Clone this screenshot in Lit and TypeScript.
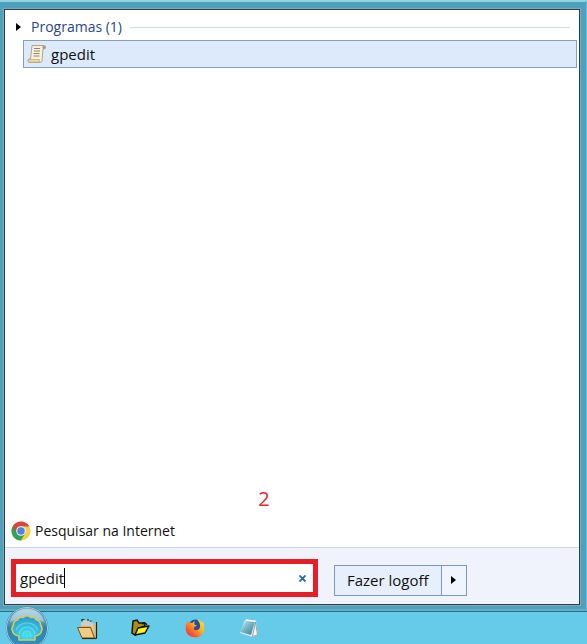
import { LitElement, html, css, svg } from "lit";
import { customElement, state } from "lit/decorators.js";

const scrollIcon = svg`
  <svg viewBox="0 0 20 20" width="20" height="20" aria-hidden="true">
    <path d="M5 1.500H17Q19 1.700 18.500 4Q18 5.500 16 5L15 17Q14.500 18.500 13 18.500H2Q.5 18 1 16Q1.500 14.500 3.500 14.800Z" fill="#f8f0d8" stroke="#b3a58a" stroke-width="1"/>
    <path d="M16 2Q14.600 3 16 5Q18.500 5.300 18.500 3.200Q18 1.500 16 2Z" fill="#a8977e"/>
    <path d="M2 15.500H12.500Q11.500 17 12.800 18.200H2Q.8 17 2 15.500Z" fill="#ead7a6" stroke="#c0a873" stroke-width=".7"/>
    <path d="M7 4.500H13M7 7H13M6.500 9.500H12.500M6.500 12H12.500" stroke="#8c877c" stroke-width="1.200"/>
  </svg>`;

const chromeIcon = svg`
  <svg viewBox="0 0 48 48" width="20" height="20" aria-hidden="true">
    <circle cx="24" cy="24" r="23" fill="#f6cf4f"/>
    <path d="M24 24L4.100 12.500A23 23 0 0 0 24 47L34 29.800Z" fill="#35a152"/>
    <path d="M4.100 12.500A23 23 0 0 1 43.900 12.500L44 13H24L14 29.800Z" fill="#cf4b41"/>
    <circle cx="24" cy="24" r="11.500" fill="#f4f4f4"/>
    <circle cx="24" cy="24" r="9" fill="#4a86e0"/>
  </svg>`;

const shellIcon = svg`
  <svg viewBox="0 0 44 44" width="44" height="44" aria-hidden="true">
    <defs>
      <linearGradient id="orb" x1="0" y1="0" x2="0" y2="1">
        <stop offset="0" stop-color="#a5c9da"/><stop offset=".3" stop-color="#6ba6c2"/>
        <stop offset=".5" stop-color="#2f80a8"/><stop offset="1" stop-color="#2b95c2"/>
      </linearGradient>
      <radialGradient id="shell" cx=".5" cy=".8" r=".7">
        <stop offset="0" stop-color="#43e2f4"/><stop offset="1" stop-color="#2f9fca"/>
      </radialGradient>
    </defs>
    <circle cx="22" cy="22" r="20.500" fill="url(#orb)" stroke="#3d7894" stroke-width="1.600"/>
    <circle cx="22" cy="22" r="20.500" fill="none" stroke="#a9dcef" stroke-width=".9"/>
    <path d="M5 16Q8 4 22 3Q36 4 39 16Q30 12 22 13Q13 12 5 16Z" fill="#d4e6ee" opacity=".5"/>
    <path d="M14 34V30Q8 29 7.500 25Q6 22 8.500 19Q8.500 14.500 12.500 14Q14 10.500 18 11.500Q22 8 26 11.500Q30 10.500 31.500 14Q35.500 14.500 35.500 19Q38 22 36.500 25Q36 29 30 30V34Z" fill="url(#shell)" stroke="#d4cb62" stroke-width="1.600" stroke-linejoin="round"/>
    <path d="M11 24Q14 17 22 17Q30 17 33 24M14 28Q16 21 22 21Q28 21 30 28M18 31Q18 25 22 25Q26 25 26 31" fill="none" stroke="#7ce5f2" stroke-width="1.200" opacity=".6"/>
  </svg>`;

const folderIcon = svg`
  <svg viewBox="0 0 22 22" width="22" height="22" aria-hidden="true">
    <path d="M4 4L7 2H13V4L18 6V19L4 12Z" fill="#cfcdc8"/>
    <path d="M5 3.500V1.500H7.500M11 1V3M12.500 3H14.500" fill="none" stroke="#17313d" stroke-width="1.200"/>
    <path d="M16 6L19.500 4V20H17Z" fill="#d9bd7f"/>
    <path d="M19.500 4V20.500" stroke="#282315" stroke-width="1.200"/>
    <path d="M4 8H14L18.500 20H8Z" fill="#d8b065"/>
    <path d="M.5 9.500H13.500L17.500 20H5Z" fill="#f0cd80" stroke="#765422" stroke-width="1"/>
    <path d="M5 20.500H19.500" stroke="#3b2c14" stroke-width="1.200"/>
  </svg>`;

const openFolderIcon = svg`
  <svg viewBox="0 0 20 20" width="20" height="20" aria-hidden="true">
    <path d="M2 3L6 2L8 5H13L14 8L8 10L4 17L1 15Z" fill="#ae8b17" stroke="#171805" stroke-width="1.500"/>
    <path d="M11 6Q13 3 16 7" fill="none" stroke="#171805" stroke-width="1.500"/>
    <path d="M7 10L18 8L14 15L4 17Z" fill="#f7f325" stroke="#171805" stroke-width="1.500" stroke-linejoin="round"/>
  </svg>`;

const firefoxIcon = svg`
  <svg viewBox="0 0 20 20" width="20" height="20" aria-hidden="true">
    <defs>
      <linearGradient id="fox" x1="1" y1="0" x2="0" y2="1">
        <stop offset="0" stop-color="#ffe936"/><stop offset=".4" stop-color="#ffae22"/>
        <stop offset=".7" stop-color="#f95b2b"/><stop offset="1" stop-color="#e22857"/>
      </linearGradient>
    </defs>
    <circle cx="10.500" cy="9" r="7.500" fill="#234f9c"/>
    <path d="M2.500 3L4 5Q6 4 7 5L10 3Q9 5 9.500 6.500L12 7.500L9.500 9Q8 11 10 12Q12 13 14 11Q16 9 14.500 5Q13.500 3 12 1.500Q16 2 17 5L17.500 3Q20 7 19.300 12Q17 19.500 10 19.500Q2 19 .7 12Q0 7 2.500 3Z" fill="url(#fox)"/>
  </svg>`;

const notesIcon = svg`
  <svg viewBox="0 0 20 20" width="20" height="20" aria-hidden="true">
    <defs>
      <linearGradient id="note" x1="0" y1="0" x2="1" y2="1">
        <stop offset="0" stop-color="#d3eff4"/><stop offset=".5" stop-color="#71b3c5"/><stop offset="1" stop-color="#38798d"/>
      </linearGradient>
    </defs>
    <path d="M6 2L17 3L19 17L14 19L1 15Z" fill="#e8eff0"/>
    <path d="M7 2L16 3.500L12 17L1 14Z" fill="url(#note)"/>
    <path d="M7 2L17 3.500" stroke="#fff" stroke-width="1.600"/>
    <path d="M16.500 4L18.500 17L13.500 18.500Z" fill="#f3f5f4" stroke="#60757b" stroke-width=".6"/>
  </svg>`;

const arrowIcon = svg`
  <svg viewBox="0 0 5 8" width="5" height="8" aria-hidden="true"><path d="M0 0L5 4L0 8Z" fill="#000"/></svg>`;

@customElement("app-root")
export class AppRoot extends LitElement {
  @state() private query = "gpedit";

  static styles = css`
    :host {
      display: flex;
      flex-direction: column;
      box-sizing: border-box;
      min-height: 100vh;
      overflow: hidden;
      font: 14px/20px "Open Sans", "Noto Sans", sans-serif;
      color: #111;
      background: #66cae9;
    }
    * { box-sizing: border-box; }
    button, input { font: inherit; color: inherit; margin: 0; border-radius: 0; }
    button { padding: 0; border: 0; background: none; }
    svg { display: block; flex: none; }
    .frame {
      flex: 1;
      display: flex;
      padding: 7px 6px 4px 4px;
      background: #4fa0bc;
      border-top: 2px solid #8fd5e2;
      border-right: 1px solid #66b9d6;
      border-bottom: 2px solid #62aec4;
    }
    .menu {
      flex: 1;
      min-width: 0;
      display: flex;
      flex-direction: column;
      background: #fff;
      border: 1px solid #26414d;
      outline: 1px solid #83aab4;
    }
    .results {
      flex: 1;
      display: flex;
      flex-direction: column;
      padding: 7px 2px 0 18px;
    }
    .group {
      display: flex;
      align-items: center;
      gap: 8px;
      margin: 0 7px 3px -7px;
    }
    .group-toggle { display: flex; align-items: center; gap: 10px; color: #27478c; }
    .rule { flex: 1; height: 1px; background: #cbdde9; }
    .result, .query, .logoff-main { font-size: 15px; }
    .result {
      display: flex;
      align-items: center;
      gap: 4px;
      height: 28px;
      padding: 0 3px;
      border: 1px solid #869fbb;
      background: #dceafc;
      text-align: left;
    }
    .step {
      margin-top: auto;
      padding-right: 72px;
      text-align: center;
      font-size: 20px;
      line-height: 24px;
      color: #e3272e;
    }
    .web {
      display: flex;
      align-items: center;
      gap: 4px;
      padding: 10px 6px 6px;
      color: inherit;
      text-decoration: none;
    }
    .actions {
      display: flex;
      align-items: center;
      gap: 16px;
      padding: 11px 6px 7px;
      border-top: 1px solid #ced9e6;
      background: #f0f3fb;
    }
    .search {
      flex: 0 1 307px;
      min-width: 0;
      display: flex;
      align-items: center;
      height: 38px;
      padding: 0 7px 0 4px;
      border: 5px solid #e61e28;
      background: #fff;
    }
    .query {
      field-sizing: content;
      padding: 0;
      border: 0;
      outline: 0;
      background: none;
      caret-color: transparent;
    }
    .caret { width: 1px; height: 20px; background: #000; }
    .clear { display: flex; margin-left: auto; }
    .logoff { display: flex; height: 31px; margin-top: 4px; border: 1px solid #7b97ba; }
    .logoff-main { padding: 0 12px; background: #e7effc; }
    .logoff-more { display: grid; place-items: center; width: 25px; border-left: 1px solid #7b97ba; background: #f0f4fc; }
    .taskbar {
      display: flex;
      align-items: center;
      gap: 34px;
      height: 33px;
      padding-left: 5px;
      border-top: 1px solid #2c6e88;
    }
    .task { display: grid; place-items: center; width: 20px; height: 20px; }
    .orb { width: 44px; height: 44px; margin-right: -6px; }
  `;

  private onInput(e: Event) {
    this.query = (e.target as HTMLInputElement).value;
  }

  render() {
    return html`
      <main class="frame">
        <section class="menu">
          <div class="results">
            <div class="group">
              <button class="group-toggle">${arrowIcon}<span>Programas (1)</span></button>
              <span class="rule"></span>
            </div>
            <button class="result">${scrollIcon}<span>gpedit</span></button>
            <div class="step">2</div>
          </div>
          <a class="web" href="#">${chromeIcon}<span>Pesquisar na Internet</span></a>
          <div class="actions">
            <div class="search">
              <input class="query" type="text" aria-label="Pesquisar" .value=${this.query} @input=${this.onInput} />
              <span class="caret"></span>
              <button class="clear" aria-label="Limpar" @click=${() => (this.query = "")}>
                <svg viewBox="0 0 7 7" width="7" height="7"><path d="M.5 .5L6.500 6.500M6.500 .5L.5 6.500" stroke="#286c99" stroke-width="1.900"/></svg>
              </button>
            </div>
            <div class="logoff">
              <button class="logoff-main">Fazer logoff</button>
              <button class="logoff-more" aria-label="Mais opções">${arrowIcon}</button>
            </div>
          </div>
        </section>
      </main>
      <nav class="taskbar">
        <button class="orb" aria-label="Iniciar">${shellIcon}</button>
        <button class="task" aria-label="Explorador">${folderIcon}</button>
        <button class="task" aria-label="Pasta">${openFolderIcon}</button>
        <button class="task" aria-label="Firefox">${firefoxIcon}</button>
        <button class="task" aria-label="Notas">${notesIcon}</button>
      </nav>
    `;
  }
}
